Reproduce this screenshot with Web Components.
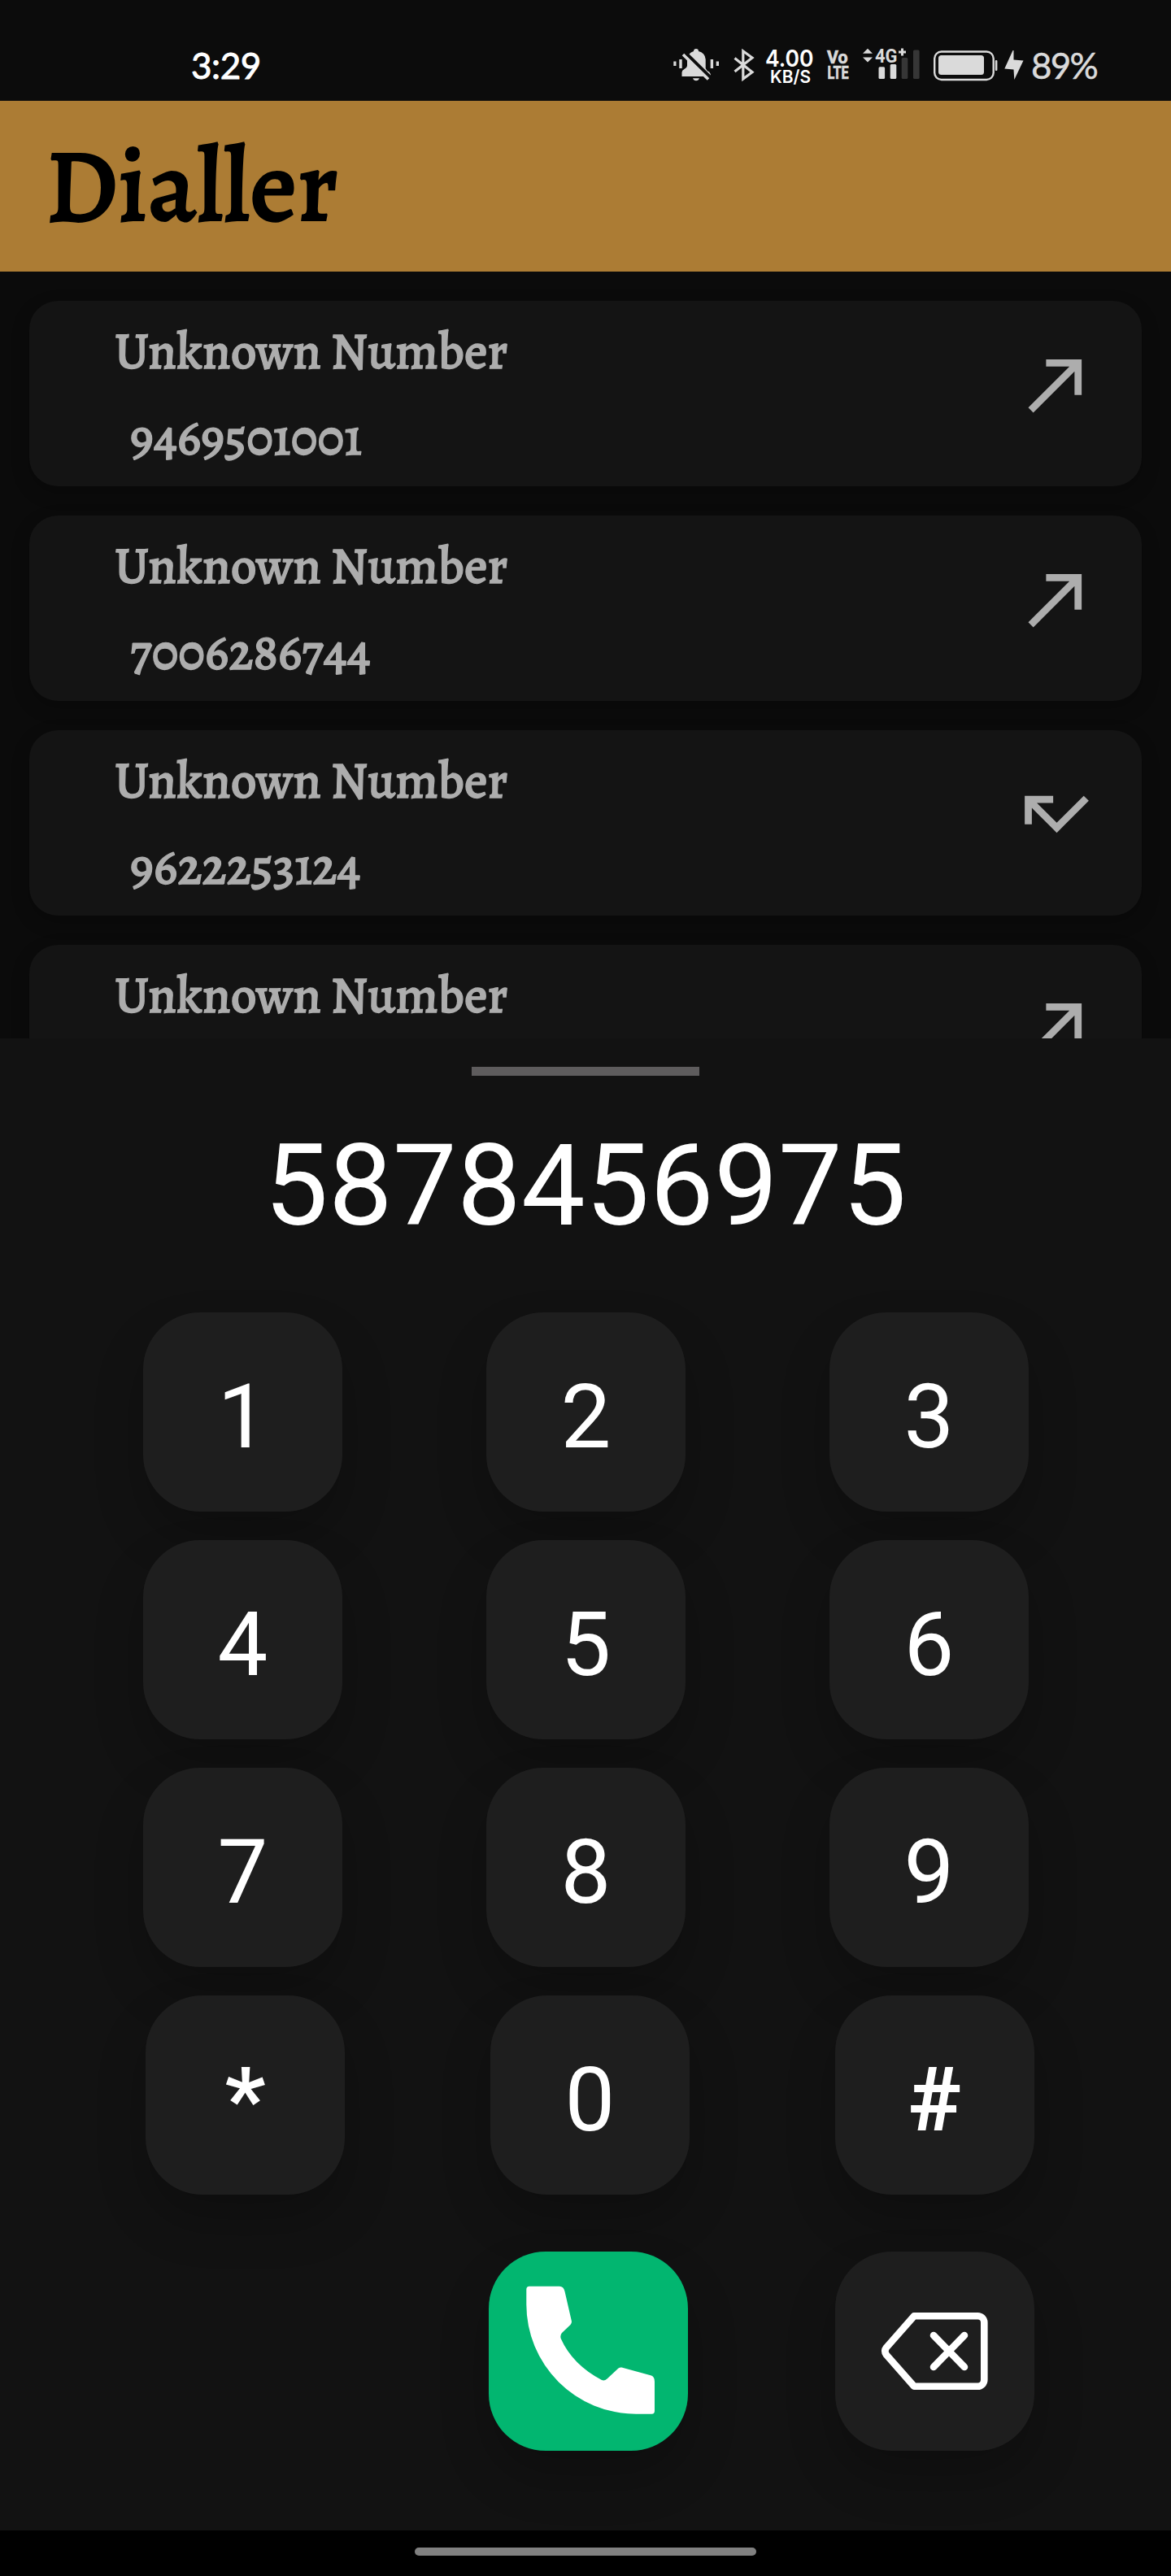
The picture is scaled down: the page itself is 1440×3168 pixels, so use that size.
<!DOCTYPE html>
<html lang="en">
<head>
<meta charset="utf-8">
<title>Dialler</title>
<style>
html,body{margin:0;padding:0;background:#0b0b0b}
body{width:1440px;height:3168px;overflow:hidden}
</style>
</head>
<body>
<dialler-app></dialler-app>
<script>
const define = (name, render) => customElements.define(name, class extends HTMLElement {
  connectedCallback() {
    if (this.shadowRoot) return;
    this.attachShadow({ mode: 'open' }).innerHTML = render(this);
  }
});

// Status bar: each indicator is a slice of one shared coordinate strip, laid side by side.
const slice = (x, w, body) => `<svg width="${w}" height="124" viewBox="${x} 0 ${w} 124">${body}</svg>`;
define('status-bar', () => `
<style>
:host{display:flex;height:124px;background:#0c0c0c;font-family:Lato,sans-serif;color:#fff}
.time{width:585px;box-sizing:content-box;padding-left:235px;font-size:44px;line-height:160px;letter-spacing:-.4px;-webkit-text-stroke:.9px #fff}
.pct{font-size:44px;line-height:160px;letter-spacing:-1.8px;color:#dadada;padding-left:3px;-webkit-text-stroke:.5px #dadada}
svg{display:block;flex:none;overflow:visible;fill:#dadada;font-family:Inter,sans-serif}
</style>
<div class="time">3:29</div>
${slice(820, 72, `
  <path d="M845 73a11.3 10.5 0 0 1 8-10a3 3 0 0 1 6 0a11.3 10.5 0 0 1 8.700 10V84q1 3 4.500 4.500q1.800 1.500 1.800 5.500H838.500v-5q0-2.500 3-4q3.500-2 3.500-4z"/>
  <path d="M852 96.200h8q-1 3-4 3t-4-3z"/>
  <path d="M842.500 64.500L874 95.500" stroke="#0c0c0c" stroke-width="4"/>
  <path d="M840 67L871 97.500" stroke="#dadada" stroke-width="3.600"/>
  <path d="M828.300 75.500h3.200v5.500h-3.200zM835.300 73h3.400v11h-3.400zM873.700 73h3.400v11h-3.400zM880.700 75.500h3.300v5.500h-3.300z"/>`)}
${slice(892, 42, `<path d="M903.500 71.500L925 88.800L913.800 97V62.800L925 71L903.500 88" fill="none" stroke="#dadada" stroke-width="3.200"/>`)}
${slice(934, 74, `<g fill="#fff"><text x="941" y="81.500" font-size="29" font-weight="600" textLength="59.500" lengthAdjust="spacingAndGlyphs">4.00</text>
  <text x="947" y="101.500" font-size="21.500" font-weight="600" textLength="50" lengthAdjust="spacingAndGlyphs">KB/S</text></g>`)}
${slice(1008, 44, `<g font-family="Roboto" font-weight="700" stroke="#dadada" stroke-width=".7"><text x="1017" y="78" font-size="22.500" textLength="25.500" lengthAdjust="spacingAndGlyphs">Vo</text>
  <text x="1017.500" y="97" font-size="22" textLength="26" lengthAdjust="spacingAndGlyphs">LTE</text></g>`)}
${slice(1052, 88, `<path d="M1061 65.800l6-6 6 6zM1061 70.500h12l-6 6z"/>
  <g font-family="Roboto" font-weight="700"><text x="1076" y="77" font-size="24" textLength="27.500" lengthAdjust="spacingAndGlyphs">4G</text></g>
  <path d="M1105 62.500h3v-3h3v3h3v3h-3v3h-3v-3h-3z"/>
  <rect x="1080.500" y="82.300" width="7.600" height="14.700" rx="1.500"/><rect x="1094.700" y="79" width="7.600" height="18" rx="1.500"/>
  <rect x="1108.700" y="71" width="7.600" height="26" rx="1.500" fill="#363636"/><rect x="1123" y="61.500" width="7.600" height="35.500" rx="1.500" fill="#363636"/>`)}
${slice(1140, 90, `<rect x="1149.200" y="63.500" width="72.500" height="34.500" rx="8.500" fill="none" stroke="#dadada" stroke-width="2.400"/>
  <rect x="1154" y="68" width="56" height="24" rx="3.500"/><rect x="1223.800" y="74" width="2.600" height="13" rx="1"/>`)}
${slice(1230, 35, `<path d="M1245.500 62L1235.300 84.500L1246.500 85.500L1247.300 98L1258.500 74.500L1246.500 73.500V62z"/>`)}
<div class="pct">89%</div>`);

define('app-header', () => `
<style>
:host{display:block;height:210px;background:#ac7c34;color:#000;box-sizing:border-box;padding-left:56px;
font:500 127px/210px Alegreya,"Liberation Serif",serif;letter-spacing:.4px;-webkit-text-stroke:2.2px #000}
</style><slot></slot>`);

const arrows = {
  made: 'M9 5v2h6.590L4 18.590 5.410 20 17 8.410V15h2V5z',
  missed: 'M19.590 7L12 14.590 6.410 9H11V7H3v8h2v-4.590l7 7 9-9z'
};
define('call-card', el => {
  const n = el.getAttribute('number') || '';
  return `
<style>
:host{display:flex;flex:none;justify-content:space-between;height:228px;box-sizing:border-box;padding:0 52px 0 105px;
background:#141414;border-radius:35px;box-shadow:0 8px 22px rgba(0,0,0,.22);color:#adadad;
font-family:Alegreya,"Liberation Serif",serif;font-weight:500;-webkit-text-stroke:1.3px #adadad}
.name{font-size:63px;line-height:70px;padding-top:27px;white-space:nowrap}
.icon{width:105px;height:105px;margin-top:50px;fill:#adadad}
.num{font-size:63px;line-height:80px;padding:31px 0 0 19px}
</style>
<div><div class="name"><slot></slot></div>
${n ? `<div class="num">${n}</div>` : ''}</div>
<svg class="icon" viewBox="0 0 24 24"><path d="${arrows[el.getAttribute('kind')]}"/></svg>`;
});

define('call-list', () => `
<style>
:host{display:flex;flex-direction:column;gap:36px;height:943px;box-sizing:border-box;padding:36px 36px 0;overflow:hidden;background:#0b0b0b}
</style><slot></slot>`);

define('dial-key', () => `
<style>
:host{display:flex;flex:none;align-items:center;justify-content:center;width:245px;height:245px;box-sizing:border-box;padding-top:12px;
border-radius:70px;background:#1e1e1e;color:#fff;font:110px Roboto,sans-serif;box-shadow:0 32px 60px rgba(0,0,0,.22)}
:host([symbol]){font-weight:700}
:host([icon]){padding:0}
:host([call]){background:#02b670}
::slotted(svg){display:block}
</style><slot></slot>`);

define('key-row', () => `
<style>
:host{display:flex;gap:177px;padding-left:176px}
:host([wide]){gap:179px;padding-left:179px}
:host([actions]){gap:181px;padding:35px 0 0 601px}
</style><slot></slot>`);

define('dial-sheet', () => `
<style>
:host{display:flex;flex-direction:column;gap:35px;height:1835px;background:#121212;overflow:hidden}
.handle{width:280px;height:11px;margin:35px auto -1px;background:#5e5c5d;flex:none}
.number{height:222px;text-align:center;color:#fff;font:140px/202px Roboto,sans-serif;flex:none;letter-spacing:.3px}
</style>
<div class="handle"></div>
<div class="number">5878456975</div>
<slot></slot>`);

define('nav-bar', () => `
<style>
:host{display:flex;justify-content:center;height:56px;background:#000}
i{width:420px;height:10px;margin-top:21px;border-radius:5px;background:#808080}
</style><i></i>`);

define('dialler-app', () => `
<style>:host{display:block;width:1440px}</style>
<status-bar></status-bar>
<app-header>Dialler</app-header>
<call-list>
  <call-card kind="made" number="9469501001">Unknown Number</call-card>
  <call-card kind="made" number="7006286744">Unknown Number</call-card>
  <call-card kind="missed" number="9622253124">Unknown Number</call-card>
  <call-card kind="made">Unknown Number</call-card>
</call-list>
<dial-sheet>
  <key-row><dial-key>1</dial-key><dial-key>2</dial-key><dial-key>3</dial-key></key-row>
  <key-row><dial-key>4</dial-key><dial-key>5</dial-key><dial-key>6</dial-key></key-row>
  <key-row><dial-key>7</dial-key><dial-key>8</dial-key><dial-key>9</dial-key></key-row>
  <key-row wide><dial-key symbol>*</dial-key><dial-key>0</dial-key><dial-key symbol>#</dial-key></key-row>
  <key-row actions>
    <dial-key call icon><svg width="245" height="245" viewBox="601 2769 245 245" fill="#fff"><path d="M651 2811.700H688Q693 2811.700 694.500 2818L703 2855Q703 2857.500 701.500 2859L691 2869Q688.500 2872 689.700 2876Q704 2908 740 2927Q743.500 2928.300 746.500 2925.500L760.500 2912.500Q762.500 2911 764.500 2911.500L801 2921.500Q805 2923 805 2929V2965Q805 2968.700 801.500 2968.700H782A134.700 134.700 0 0 1 647.300 2834V2815.500Q647.300 2811.700 651 2811.700z"/></svg></dial-key>
    <dial-key icon><svg width="245" height="245" viewBox="1027 2769 245 245" fill="none" stroke="#fff" stroke-width="8.600" stroke-linecap="round" stroke-linejoin="round"><path d="M1124 2848.300H1202.300A8 8 0 0 1 1210.300 2856.300V2926.700A8 8 0 0 1 1202.300 2934.700H1124L1090 2896Q1086.500 2891.500 1090 2887z"/><path d="M1148 2872L1186 2911M1186 2872L1148 2911"/></svg></dial-key>
  </key-row>
</dial-sheet>
<nav-bar></nav-bar>`);
</script>
</body>
</html>
